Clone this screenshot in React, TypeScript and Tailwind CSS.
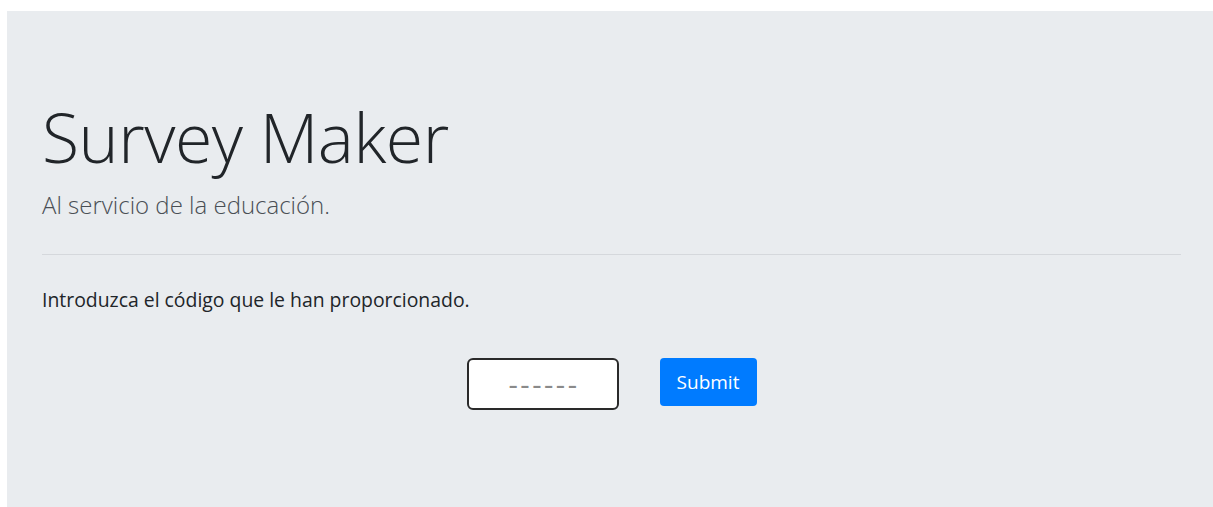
export default function App() {
  return (
    <div className="min-h-[507px] bg-white pt-[11px] pl-[7px]" style={{ fontFamily: '"Open Sans", "Noto Sans", sans-serif' }}>
      <div className="h-[496px] bg-[#e9ecef] pl-[35px] pr-[32px] pt-[84px]">
        <h1 className="text-[68px] font-light leading-[84px] text-[#212529] tracking-[-0.5px]">Survey Maker</h1>
        <p className="mt-[8px] text-[24px] font-light leading-[36px] text-[#4a4f55]">Al servicio de la educación.</p>
        <hr className="mt-[31px] border-0 border-t border-[#d5d8dc]" />
        <p className="mt-[30px] text-[19.4px] leading-[30px] text-[#212529]">Introduzca el código que le han proporcionado.</p>
        <div className="mt-[43px] flex items-start justify-center gap-[41px]">
          <input
            type="text"
            placeholder="------"
            className="h-[52px] w-[152px] rounded-[6px] border-2 border-[#2a2a2a] bg-white pb-[2px] pl-[3px] text-center text-[29px] tracking-[2.5px] text-[#495057] outline-none placeholder:text-[#8a8a8a]"
          />
          <button className="h-[48px] w-[97px] rounded-[4px] bg-[#007bff] text-[19px] text-white">Submit</button>
        </div>
      </div>
    </div>
  );
}
